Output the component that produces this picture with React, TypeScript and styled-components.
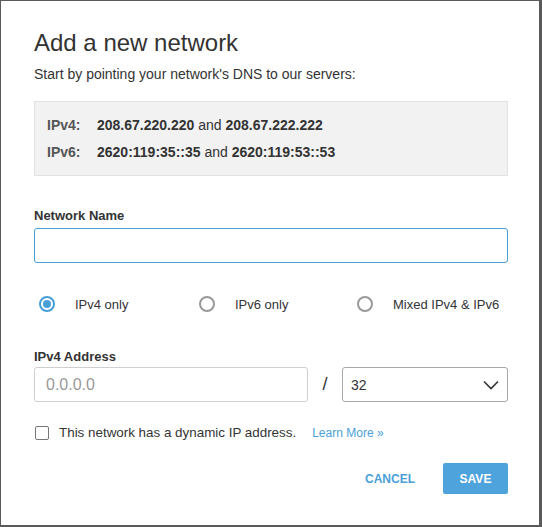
import React, { useState } from "react";
import styled, { createGlobalStyle } from "styled-components";

const GlobalStyle = createGlobalStyle`
  html, body {
    margin: 0;
    padding: 0;
    background: #5a5a5a;
  }
  * {
    box-sizing: border-box;
  }
`;

// Modal shell
const Modal = styled.div`
  margin: 1px 0 0 1px;
  width: 538px;
  height: 524px;
  background: #ffffff;
  padding: 28px 31px 0 33px;
  font-family: "Liberation Sans", Arial, sans-serif;
  color: #333;
  display: flex;
  flex-direction: column;
`;

const Title = styled.h1`
  margin: 0;
  font-size: 24px;
  font-weight: 400;
  line-height: 28px;
  color: #333;
`;

const Subtitle = styled.p`
  margin: 8px 0 0 0;
  font-size: 14px;
  line-height: 18px;
  color: #333;
`;

const DnsBox = styled.div`
  margin-top: 18px;
  background: #f2f2f2;
  border: 1px solid #e2e2e2;
  padding: 14px 12px 14px 12px;
  display: flex;
  flex-direction: column;
  gap: 9px;
`;

const DnsRow = styled.div`
  display: flex;
  font-size: 14px;
  line-height: 18px;
`;

const DnsLabel = styled.span`
  width: 50px;
  font-weight: 700;
  color: #555;
`;

const DnsValue = styled.span`
  color: #333;
  b {
    font-weight: 700;
  }
`;

const FieldLabel = styled.label<{ $top: number }>`
  display: block;
  margin-top: ${(p) => p.$top}px;
  font-size: 13px;
  line-height: 16px;
  font-weight: 700;
  color: #333;
`;

const TextInput = styled.input<{ $focused?: boolean }>`
  display: block;
  width: 100%;
  height: 35px;
  margin-top: 4px;
  border: 1px solid ${(p) => (p.$focused ? "#4a9fd8" : "#cfcfcf")};
  border-radius: 3px;
  padding: 0 11px;
  font-family: "Liberation Sans", Arial, sans-serif;
  font-size: 16px;
  color: #333;
  outline: none;
  &::placeholder {
    color: #999;
  }
`;

const AddressInput = styled(TextInput)`
  width: 274px;
  flex: none;
  margin-top: 0;
`;

const RadioGroup = styled.div`
  display: flex;
  margin-top: 33px;
  padding-left: 5px;
  align-items: center;
`;

const RadioOption = styled.label<{ $width: number }>`
  display: flex;
  align-items: center;
  width: ${(p) => p.$width}px;
  font-size: 13px;
  color: #333;
  cursor: pointer;
`;

const RadioCircle = styled.span<{ $checked: boolean }>`
  width: 16px;
  height: 16px;
  border-radius: 50%;
  border: 2px solid ${(p) => (p.$checked ? "#4a9fd8" : "#999")};
  margin-right: 20px;
  display: flex;
  align-items: center;
  justify-content: center;
  &::after {
    content: "";
    width: 8px;
    height: 8px;
    border-radius: 50%;
    background: #4a9fd8;
    display: ${(p) => (p.$checked ? "block" : "none")};
  }
`;

const AddressRow = styled.div`
  display: flex;
  align-items: center;
  margin-top: 2px;
`;

const Slash = styled.span`
  width: 34px;
  text-align: center;
  font-size: 18px;
  color: #333;
`;

const SelectBox = styled.div`
  flex: 1;
  height: 35px;
  border: 1px solid #a8a8a8;
  border-radius: 3px;
  display: flex;
  align-items: center;
  justify-content: space-between;
  padding: 0 8px 0 8px;
  font-size: 14px;
  color: #333;
`;

const CheckRow = styled.label`
  display: flex;
  align-items: center;
  margin-top: 23px;
  font-size: 13.4px;
  color: #333;
`;

const CheckSquare = styled.span`
  width: 14px;
  height: 14px;
  border: 1.5px solid #777;
  border-radius: 2px;
  margin: 0 10px 0 1px;
`;

const LearnMore = styled.a`
  margin-left: 16px;
  font-size: 12px;
  color: #4a9fd8;
  text-decoration: none;
`;

const Footer = styled.div`
  display: flex;
  justify-content: flex-end;
  align-items: center;
  margin-top: 23px;
`;

const CancelButton = styled.button`
  background: none;
  border: none;
  font-family: "Liberation Sans", Arial, sans-serif;
  font-weight: 700;
  font-size: 12px;
  color: #4a9fd8;
  padding: 0;
  margin-right: 28px;
  cursor: pointer;
`;

const SaveButton = styled.button`
  width: 65px;
  height: 31px;
  background: #4fa3dc;
  border: none;
  border-radius: 2px;
  color: #fff;
  font-family: "Liberation Sans", Arial, sans-serif;
  font-weight: 700;
  font-size: 12px;
  cursor: pointer;
`;

const modes = [
  { id: "v4", label: "IPv4 only", width: 160 },
  { id: "v6", label: "IPv6 only", width: 158 },
  { id: "mixed", label: "Mixed IPv4 & IPv6", width: 150 },
];

const App: React.FC = () => {
  const [mode, setMode] = useState("v4");

  return (
    <>
      <GlobalStyle />
      <Modal>
        <Title>Add a new network</Title>
        <Subtitle>Start by pointing your network's DNS to our servers:</Subtitle>
        <DnsBox>
          <DnsRow>
            <DnsLabel>IPv4:</DnsLabel>
            <DnsValue>
              <b>208.67.220.220</b> and <b>208.67.222.222</b>
            </DnsValue>
          </DnsRow>
          <DnsRow>
            <DnsLabel>IPv6:</DnsLabel>
            <DnsValue>
              <b>2620:119:35::35</b> and <b>2620:119:53::53</b>
            </DnsValue>
          </DnsRow>
        </DnsBox>

        <FieldLabel $top={32}>Network Name</FieldLabel>
        <TextInput $focused />

        <RadioGroup>
          {modes.map((m) => (
            <RadioOption key={m.id} $width={m.width} onClick={() => setMode(m.id)}>
              <RadioCircle $checked={mode === m.id} />
              {m.label}
            </RadioOption>
          ))}
        </RadioGroup>

        <FieldLabel $top={37}>IPv4 Address</FieldLabel>
        <AddressRow>
          <AddressInput placeholder="0.0.0.0" />
          <Slash>/</Slash>
          <SelectBox>
            <span>32</span>
            <svg width="16" height="10" viewBox="0 0 16 10" fill="none">
              <path d="M1 1.5L8 8.5L15 1.5" stroke="#333" strokeWidth="1.6" />
            </svg>
          </SelectBox>
        </AddressRow>

        <CheckRow>
          <CheckSquare />
          This network has a dynamic IP address.
          <LearnMore href="#">Learn More »</LearnMore>
        </CheckRow>

        <Footer>
          <CancelButton>CANCEL</CancelButton>
          <SaveButton>SAVE</SaveButton>
        </Footer>
      </Modal>
    </>
  );
};

export default App;
